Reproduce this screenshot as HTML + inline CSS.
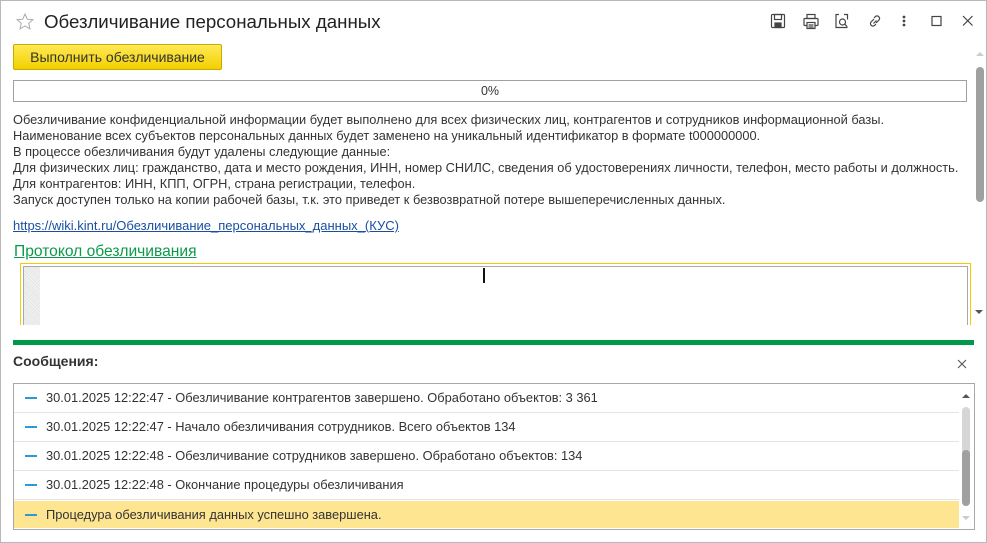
<!DOCTYPE html>
<html><head><meta charset="utf-8"><style>
*{box-sizing:border-box;margin:0;padding:0}
body{width:987px;height:543px;overflow:hidden;background:#fff;font-family:"Liberation Sans",Arial,sans-serif;color:#333;position:relative}
.abs{position:absolute}
.frame{left:0;top:0;width:987px;height:543px;border:1px solid #b8b8b8}
.title{left:44px;top:11px;font-size:18.7px;color:#222}
.btn{left:13px;top:44px;width:209px;height:26px;background:linear-gradient(#ffe955,#f3d000);border:1px solid #c9ab00;border-radius:2px;font-size:14px;color:#333;text-align:center;line-height:24px}
.prog{left:13px;top:80px;width:954px;height:22px;border:1px solid #a0a0a0;text-align:center;font-size:12.5px;line-height:20px}
.txt{left:13px;top:112px;font-size:12.8px;line-height:16px;color:#333;white-space:nowrap}
.link{left:13px;top:218px;font-size:13px;color:#1a4fa0;text-decoration:underline}
.prot{left:14px;top:243px;font-size:15.6px;color:#0d9a48;text-decoration:underline}
.ta{left:20px;top:263px;width:951px;height:62px;border:1px solid #f0cc00;border-bottom:none}
.ta2{left:23px;top:266px;width:945px;height:59px;border:1px solid #a8a8a8;border-bottom:none}
.hatch{left:24px;top:267px;width:16px;height:58px;background:repeating-linear-gradient(45deg,#e4e4e4 0 1px,#f4f4f4 1px 2px)}
.row{position:absolute;left:14px;width:945px;height:29px;border-bottom:1px solid #e4e4e4;font-size:12.85px;line-height:28px;padding-left:32px;color:#333}
.row:before{content:"";position:absolute;left:11px;top:13px;width:12px;height:2px;background:#2d9ad6}
</style></head><body>
<div class="abs frame"></div>
<svg class="abs" style="left:15px;top:12px" width="20" height="20" viewBox="0 0 20 20"><path d="M10 2l2.3 5.2 5.6.5-4.2 3.7 1.3 5.5L10 14l-5 2.9 1.3-5.5L2.1 7.7l5.6-.5z" fill="none" stroke="#aaa" stroke-width="1"/></svg>
<div class="abs title">Обезличивание персональных данных</div>
<svg class="abs" style="left:770px;top:13px" width="210" height="18" viewBox="0 0 210 18" fill="none" stroke="#444" stroke-width="1.2">
<rect x="1.5" y="1.5" width="13" height="13" rx="1"/><rect x="4.5" y="1.5" width="7" height="5"/><rect x="5" y="10" width="6" height="4.5" fill="#444"/>
<rect x="37" y="1.5" width="8" height="4"/><rect x="34" y="5.5" width="14" height="7" rx="1"/><rect x="37" y="9.5" width="8" height="6" fill="#fff"/><path d="M38.5 12h5M38.5 14h5"/>
<path d="M69 1.5h-3v13h11.5M74 1.5h3.5v5"/><circle cx="72.5" cy="9" r="3"/><path d="M74.7 11.2l2.5 2.5"/>
<path d="M104 6l-3 3a2.5 2.5 0 003.5 3.5l1.5-1.5M106 10l3-3a2.5 2.5 0 00-3.5-3.5L104 5M103.5 10.5l3-3"/>
<circle cx="134" cy="4" r=".8" fill="#444"/><circle cx="134" cy="8" r=".8" fill="#444"/><circle cx="134" cy="12" r=".8" fill="#444"/>
<rect x="162" y="3.5" width="9" height="9"/>
<path d="M193 3l9.5 9.5M202.5 3L193 12.5"/></svg>
<div class="abs btn">Выполнить обезличивание</div>
<div class="abs prog">0%</div>
<div class="abs txt">Обезличивание конфиденциальной информации будет выполнено для всех физических лиц, контрагентов и сотрудников информационной базы.<br>Наименование всех субъектов персональных данных будет заменено на уникальный идентификатор в формате t000000000.<br>В процессе обезличивания будут удалены следующие данные:<br>Для физических лиц: гражданство, дата и место рождения, ИНН, номер СНИЛС, сведения об удостоверениях личности, телефон, место работы и должность.<br>Для контрагентов: ИНН, КПП, ОГРН, страна регистрации, телефон.<br>Запуск доступен только на копии рабочей базы, т.к. это приведет к безвозвратной потере вышеперечисленных данных.</div>
<div class="abs link">https://wiki.kint.ru/Обезличивание_персональных_данных_(КУС)</div>
<div class="abs prot">Протокол обезличивания</div>
<div class="abs ta"></div><div class="abs ta2"></div><div class="abs hatch"></div>
<div class="abs" style="left:483px;top:268px;width:2px;height:15px;background:#111"></div>
<div class="abs" style="left:976px;top:52px;border:4px solid transparent;border-bottom-color:#ccc;border-top:0"></div>
<div class="abs" style="left:976px;top:67px;width:8px;height:135px;background:#a0a0a0;border-radius:4px"></div>
<div class="abs" style="left:975px;top:310px;border:4px solid transparent;border-top-color:#555;border-bottom:0"></div>
<div class="abs" style="left:13px;top:340px;width:961px;height:5px;background:#00994a"></div>
<div class="abs" style="left:13px;top:353px;font-size:14px;font-weight:bold;color:#333">Сообщения:</div>
<svg class="abs" style="left:957px;top:359px" width="10" height="10"><path d="M1 1l8 8M9 1L1 9" stroke="#555" stroke-width="1.1"/></svg>
<div class="abs" style="left:13px;top:383px;width:962px;height:147px;border:1px solid #a8a8a8"></div>
<div class="row" style="top:384px">30.01.2025 12:22:47 - Обезличивание контрагентов завершено. Обработано объектов: 3 361</div>
<div class="row" style="top:413px">30.01.2025 12:22:47 - Начало обезличивания сотрудников. Всего объектов 134</div>
<div class="row" style="top:442px">30.01.2025 12:22:48 - Обезличивание сотрудников завершено. Обработано объектов: 134</div>
<div class="row" style="top:471px">30.01.2025 12:22:48 - Окончание процедуры обезличивания</div>
<div class="row" style="top:501px;height:27px;background:#fde591;border:none">Процедура обезличивания данных успешно завершена.</div>
<div class="abs" style="left:962px;top:394px;border:4px solid transparent;border-bottom-color:#555;border-top:0"></div>
<div class="abs" style="left:962px;top:407px;width:8px;height:99px;background:#d6d6d6;border-radius:4px"></div>
<div class="abs" style="left:962px;top:450px;width:8px;height:56px;background:#a0a0a0;border-radius:4px"></div>
<div class="abs" style="left:962px;top:516px;border:4px solid transparent;border-top-color:#ccc;border-bottom:0"></div>
</body></html>
